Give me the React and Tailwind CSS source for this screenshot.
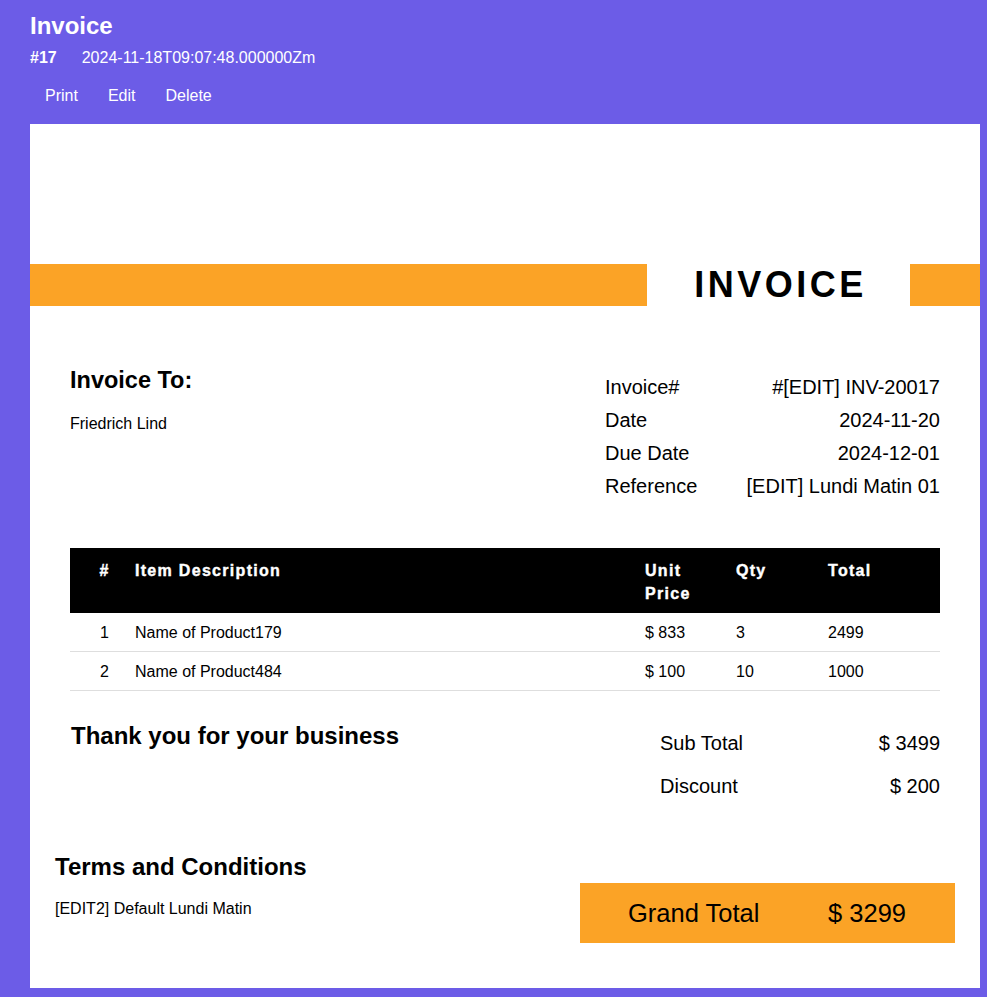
import React from 'react';

const items = [
  { no: 1, name: 'Name of Product179', price: '$ 833', qty: 3, total: 2499 },
  { no: 2, name: 'Name of Product484', price: '$ 100', qty: 10, total: 1000 },
];

const details = [
  ['Invoice#', '#[EDIT] INV-20017'],
  ['Date', '2024-11-20'],
  ['Due Date', '2024-12-01'],
  ['Reference', '[EDIT] Lundi Matin 01'],
];

function App() {
  return (
    <div className="min-h-[997px] bg-[#6c5ce7] font-['Liberation_Sans',Arial,sans-serif] text-black">
      {/* Page header */}
      <div className="px-[30px] pt-[12px] text-white">
        <h1 className="text-[24px] leading-[28px] font-bold">Invoice</h1>
        <div className="mt-[6px] flex text-[16px] leading-[24px]">
          <span className="font-bold">#17</span>
          <span className="ml-[25px]">2024-11-18T09:07:48.000000Zm</span>
        </div>
        <div className="mt-[14px] flex pb-[16px] text-[16px] leading-[24px]">
          <button className="px-[15px]">Print</button>
          <button className="px-[15px]">Edit</button>
          <button className="px-[15px]">Delete</button>
        </div>
      </div>

      {/* Invoice sheet */}
      <div className="ml-[30px] w-[950px] bg-white">
        <div className="h-[140px]" />
        <div className="flex h-[42px]">
          <div className="w-[617px] bg-[#fba326]" />
          <div className="flex w-[263px] items-center justify-center pl-[4px] text-[36px] font-bold tracking-[3.5px]">
            INVOICE
          </div>
          <div className="flex-1 bg-[#fba326]" />
        </div>

        <div className="px-[40px]">
          {/* Bill to + details */}
          <div className="flex justify-between pt-[61px]">
            <div>
              <h4 className="text-[23.5px] leading-[26px] font-bold">Invoice To:</h4>
              <p className="mt-[21px] text-[16px] leading-[20px]">Friedrich Lind</p>
            </div>
            <div className="w-[335px] pt-[4px] text-[20px] leading-[33px]">
              {details.map(([k, v]) => (
                <div key={k} className="flex justify-between">
                  <span>{k}</span>
                  <span>{v}</span>
                </div>
              ))}
            </div>
          </div>

          {/* Items table */}
          <div className="mt-[45px]">
            <div className="flex h-[65px] items-start bg-black pt-[11px] text-[16px] leading-[23px] font-bold tracking-[1.3px] text-white [-webkit-text-stroke:0.4px_white]">
              <div className="w-[65px] pl-[4px] text-center">#</div>
              <div className="w-[510px]">Item Description</div>
              <div className="w-[91px]">
                Unit
                <br />
                Price
              </div>
              <div className="w-[92px]">Qty</div>
              <div className="flex-1">Total</div>
            </div>
            {items.map((it) => (
              <div key={it.no} className="flex h-[39px] items-center border-b border-[#dedede] pt-[2px] text-[16px]">
                <div className="w-[65px] pl-[4px] text-center">{it.no}</div>
                <div className="w-[510px]">{it.name}</div>
                <div className="w-[91px]">{it.price}</div>
                <div className="w-[92px]">{it.qty}</div>
                <div className="flex-1">{it.total}</div>
              </div>
            ))}
          </div>

          {/* Thanks + totals */}
          <div className="mt-[31px] flex justify-between">
            <h4 className="pl-[1px] text-[24px] leading-[28px] font-bold">Thank you for your business</h4>
            <div className="w-[280px] text-[20px] leading-[43px]">
              <div className="flex justify-between">
                <span>Sub Total</span>
                <span>$ 3499</span>
              </div>
              <div className="flex justify-between">
                <span>Discount</span>
                <span>$ 200</span>
              </div>
            </div>
          </div>
        </div>

        {/* Terms + grand total */}
        <div className="mt-[45px] flex justify-between px-[25px] pb-[45px]">
          <div>
            <h4 className="text-[24px] leading-[28px] font-bold">Terms and Conditions</h4>
            <p className="mt-[18px] text-[16px] leading-[20px]">[EDIT2] Default Lundi Matin</p>
          </div>
          <div className="mt-[30px] flex h-[60px] w-[375px] items-center bg-[#fba326] pl-[48px] text-[25.5px]">
            <span className="w-[200px]">Grand Total</span>
            <span>$ 3299</span>
          </div>
        </div>
      </div>
    </div>
  );
}

export default App;
